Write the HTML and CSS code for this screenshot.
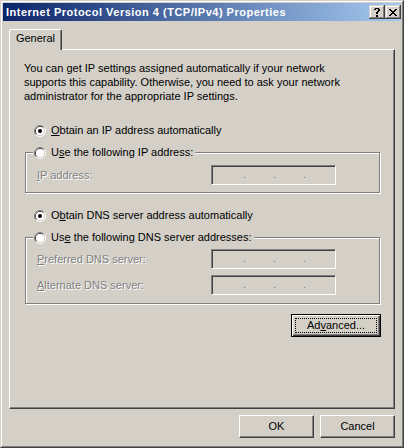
FILE: index.html
```html
<!DOCTYPE html>
<html>
<head>
<meta charset="utf-8">
<link rel="stylesheet" href="styles.css">
</head>
<body>
<div class="window">
  <div class="frame">
    <div class="titlebar">
      <span class="title">Internet Protocol Version 4 (TCP/IPv4) Properties</span>
      <div class="capbtns">
        <span class="capbtn">
          <svg width="6" height="9" viewBox="0 0 6 9" shape-rendering="crispEdges"><path d="M1 0h4v1H1zM0 1h2v1H0zM4 1h2v2H4zM3 3h2v1H3zM2 4h2v2H2zM2 7h2v2H2z" fill="#000"/></svg>
        </span>
        <span class="capbtn">
          <svg width="8" height="7" viewBox="0 0 8 7" shape-rendering="crispEdges"><path d="M0 0h2v1H0zM6 0h2v1H6zM1 1h2v1H1zM5 1h2v1H5zM2 2h4v1H2zM3 3h2v1H3zM2 4h4v1H2zM1 5h2v1H1zM5 5h2v1H5zM0 6h2v1H0zM6 6h2v1H6z" fill="#000"/></svg>
        </span>
      </div>
    </div>
    <div class="client">
      <div class="tabs">
        <div class="tab">General</div>
      </div>
      <div class="panel">
        <p class="desc">You can get IP settings assigned automatically if your network<br>supports this capability. Otherwise, you need to ask your network<br>administrator for the appropriate IP settings.</p>

        <div class="radio-row r1">
          <svg class="radio" width="12" height="12" viewBox="0 0 12 12"><path d="M9.89 2.11A5.5 5.5 0 0 0 2.11 9.89" fill="none" stroke="#808080"/><path d="M2.11 9.89A5.5 5.5 0 0 0 9.89 2.11" fill="none" stroke="#fff"/><path d="M9.18 2.82A4.5 4.5 0 0 0 2.82 9.18" fill="none" stroke="#404040"/><path d="M2.82 9.18A4.5 4.5 0 0 0 9.18 2.82" fill="none" stroke="#D4D0C8"/><circle cx="6" cy="6" r="4" fill="#fff"/><circle cx="6" cy="6" r="2" fill="#000"/></svg>
          <span><u>O</u>btain an IP address automatically</span>
        </div>

        <div class="group g1">
          <div class="legend">
            <svg class="radio" width="12" height="12" viewBox="0 0 12 12"><path d="M9.89 2.11A5.5 5.5 0 0 0 2.11 9.89" fill="none" stroke="#808080"/><path d="M2.11 9.89A5.5 5.5 0 0 0 9.89 2.11" fill="none" stroke="#fff"/><path d="M9.18 2.82A4.5 4.5 0 0 0 2.82 9.18" fill="none" stroke="#404040"/><path d="M2.82 9.18A4.5 4.5 0 0 0 9.18 2.82" fill="none" stroke="#D4D0C8"/><circle cx="6" cy="6" r="4" fill="#fff"/></svg>
            <span>U<u>s</u>e the following IP address:</span>
          </div>
          <div class="field-row fr-first">
            <span class="dis"><u>I</u>P address:</span>
            <div class="ipfield"><span class="dot">.</span><span class="dot">.</span><span class="dot">.</span></div>
          </div>
        </div>

        <div class="radio-row r3">
          <svg class="radio" width="12" height="12" viewBox="0 0 12 12"><path d="M9.89 2.11A5.5 5.5 0 0 0 2.11 9.89" fill="none" stroke="#808080"/><path d="M2.11 9.89A5.5 5.5 0 0 0 9.89 2.11" fill="none" stroke="#fff"/><path d="M9.18 2.82A4.5 4.5 0 0 0 2.82 9.18" fill="none" stroke="#404040"/><path d="M2.82 9.18A4.5 4.5 0 0 0 9.18 2.82" fill="none" stroke="#D4D0C8"/><circle cx="6" cy="6" r="4" fill="#fff"/><circle cx="6" cy="6" r="2" fill="#000"/></svg>
          <span>O<u>b</u>tain DNS server address automatically</span>
        </div>

        <div class="group g2">
          <div class="legend">
            <svg class="radio" width="12" height="12" viewBox="0 0 12 12"><path d="M9.89 2.11A5.5 5.5 0 0 0 2.11 9.89" fill="none" stroke="#808080"/><path d="M2.11 9.89A5.5 5.5 0 0 0 9.89 2.11" fill="none" stroke="#fff"/><path d="M9.18 2.82A4.5 4.5 0 0 0 2.82 9.18" fill="none" stroke="#404040"/><path d="M2.82 9.18A4.5 4.5 0 0 0 9.18 2.82" fill="none" stroke="#D4D0C8"/><circle cx="6" cy="6" r="4" fill="#fff"/></svg>
            <span>Us<u>e</u> the following DNS server addresses:</span>
          </div>
          <div class="field-row fr-dns1">
            <span class="dis"><u>P</u>referred DNS server:</span>
            <div class="ipfield"><span class="dot">.</span><span class="dot">.</span><span class="dot">.</span></div>
          </div>
          <div class="field-row fr-dns2">
            <span class="dis"><u>A</u>lternate DNS server:</span>
            <div class="ipfield"><span class="dot">.</span><span class="dot">.</span><span class="dot">.</span></div>
          </div>
        </div>

        <button class="btn default adv"><span class="focus">Ad<u>v</u>anced...</span></button>
      </div>
      <div class="footer">
        <button class="btn">OK</button>
        <button class="btn">Cancel</button>
      </div>
    </div>
  </div>
</div>
</body>
</html>
```

FILE: styles.css
```css
* { box-sizing: border-box; }
html, body { margin: 0; padding: 0; }
body {
  background: #D4D0C8;
  font-family: "Liberation Sans", Arial, sans-serif;
  font-size: 11px;
  color: #000;
}
u { text-decoration: underline; text-underline-offset: 1px; }

.window {
  width: 404px;
  height: 448px;
  border: 1px solid;
  border-color: #D4D0C8 #404040 #404040 #D4D0C8;
  background: #D4D0C8;
}
.frame {
  height: 100%;
  border: 1px solid;
  border-color: #fff #808080 #808080 #fff;
  padding: 1px;
  display: flex;
  flex-direction: column;
}
.titlebar {
  height: 18px;
  flex: none;
  background: linear-gradient(to right, #0A246A, #A6CAF0);
  display: flex;
  align-items: center;
  padding: 0 0 0 3px;
}
.title {
  flex: 1;
  color: #fff;
  font-weight: bold;
  font-size: 11px;
  letter-spacing: 0.5px;
  line-height: 13px;
  white-space: nowrap;
}
.capbtns { display: flex; }
.capbtn {
  width: 16px;
  height: 14px;
  background: #D4D0C8;
  box-shadow: inset -1px -1px 0 #404040, inset 1px 1px 0 #D4D0C8, inset -2px -2px 0 #808080, inset 2px 2px 0 #fff;
  display: flex;
  align-items: center;
  justify-content: center;
}
.capbtn svg { display: block; }

.client {
  flex: 1;
  padding: 8px 6px 7px 6px;
  display: flex;
  flex-direction: column;
}
.tabs { display: flex; height: 20px; flex: none; }
.tab {
  position: relative;
  z-index: 1;
  width: 53px;
  height: 21px;
  border: 1px solid;
  border-bottom: none;
  border-color: #fff #404040 transparent #fff;
  border-radius: 2px 2px 0 0;
  box-shadow: inset -1px 0 0 #808080;
  background: #D4D0C8;
  text-align: center;
  padding-top: 2px;
  line-height: 13px;
}
.panel {
  height: 360px;
  flex: none;
  border: 1px solid;
  border-color: #fff #404040 #404040 #fff;
  box-shadow: inset -1px -1px 0 #808080;
  display: flex;
  flex-direction: column;
  align-items: flex-start;
}
.desc { margin: 11px 0 0 14px; line-height: 14px; }

.radio-row, .legend {
  display: flex;
  align-items: center;
  height: 13px;
  line-height: 13px;
  white-space: nowrap;
}
.radio { display: block; flex: none; margin-right: 5px; }
.r1 { margin: 21px 0 0 24px; }
.r3 { margin: 16px 0 0 24px; }

.group {
  margin-left: 15px;
  width: 355px;
  border: 1px solid #808080;
  box-shadow: inset 1px 1px 0 #fff, 1px 1px 0 #fff;
  display: flex;
  flex-direction: column;
}
.g1 { margin-top: 15px; height: 41px; }
.g2 { margin-top: 15px; height: 67px; }
.legend {
  align-self: flex-start;
  margin: -7px 0 0 7px;
  padding: 0 2px 0 1px;
  background: #D4D0C8;
}
.field-row {
  display: flex;
  align-items: center;
  justify-content: space-between;
  padding: 0 43px 0 11px;
  line-height: 13px;
}
.fr-first { margin-top: 6px; }
.fr-dns1 { margin-top: 5px; }
.fr-dns2 { margin-top: 6px; }
.dis { color: #808080; text-shadow: 1px 1px 0 #fff; }
.ipfield {
  width: 125px;
  height: 20px;
  border: 1px solid;
  border-color: #808080 #fff #fff #808080;
  box-shadow: inset 1px 1px 0 #404040, inset -1px -1px 0 #D4D0C8;
  background: #D4D0C8;
  display: flex;
  align-items: flex-start;
  padding: 2px 0 0 31px;
  gap: 27px;
  line-height: 13px;
  color: #808080;
}
.dot { display: block; width: 3px; text-align: center; }

.btn {
  width: 75px;
  height: 23px;
  margin: 0;
  padding: 0;
  font: inherit;
  color: #000;
  background: #D4D0C8;
  border: 1px solid;
  border-color: #fff #404040 #404040 #fff;
  box-shadow: inset -1px -1px 0 #808080;
  display: flex;
  align-items: center;
  justify-content: center;
  line-height: 13px;
}
.btn.default {
  border-color: #000;
  box-shadow: inset 1px 1px 0 #fff, inset -1px -1px 0 #404040, inset -2px -2px 0 #808080;
  padding: 3px;
}
.adv { width: 90px; margin: 10px 13px 0 auto; }
.focus {
  flex: 1;
  align-self: stretch;
  border: 1px dotted #000;
  display: flex;
  align-items: center;
  justify-content: center;
}
.footer {
  display: flex;
  justify-content: flex-end;
  gap: 6px;
  margin-top: 6px;
}
```
